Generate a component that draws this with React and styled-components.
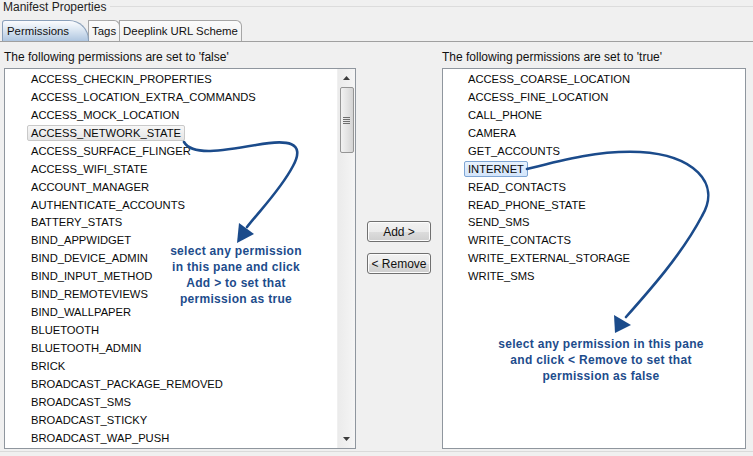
import React from "react";
import styled, { createGlobalStyle } from "styled-components";

const GlobalStyle = createGlobalStyle`
  html, body {
    margin: 0;
    padding: 0;
    background: #f0f0f0;
    font-family: "Liberation Sans", Arial, sans-serif;
    font-size: 12px;
    color: #000;
  }
`;

const Page = styled.div`
  position: relative;
  width: 753px;
  height: 456px;
  overflow: hidden;
  background: #f0f0f0;
`;

const Header = styled.div`
  display: flex;
  align-items: center;
  gap: 4px;
  height: 14px;
  padding-left: 3px;
  color: #1e1e1e;
`;

const HeaderLine = styled.div`
  flex: 1;
  height: 1px;
  background: #dcdcdc;
  margin-top: -2px;
`;

const TabBar = styled.div`
  display: flex;
  align-items: flex-end;
  height: 21px;
  margin-top: 6px;
  padding-left: 2px;
  border-bottom: 1px solid #a0a0a0;
  font-size: 11.4px;
`;

const Tab = styled.div`
  position: relative;
  height: 21px;
  line-height: 20px;
  box-sizing: border-box;
  padding: 0 ${(p) => (p.$active ? "19px" : "3px")} 0 ${(p) => (p.$active ? "4px" : "3px")};
  margin-left: ${(p) => (p.$active ? "0" : "-1px")};
  border: 1px solid ${(p) => (p.$active ? "#8aa0ba" : "#a6a6a6")};
  border-bottom: none;
  border-radius: ${(p) => (p.$active ? "3px 20px 0 0 / 3px 20px 0 0" : "0 6px 0 0")};
  background: ${(p) =>
    p.$active
      ? "linear-gradient(#fbfcfe, #dbe6f2 45%, #afc6e0)"
      : "linear-gradient(#fbfbfb, #f0f0f0)"};
  z-index: ${(p) => (p.$active ? 2 : 1)};
  color: #111;
`;

const Body = styled.div`
  display: grid;
  grid-template-columns: 352px 86px 304px;
  grid-template-rows: 26px 381px;
  padding-left: 4px;
`;

const Caption = styled.div`
  align-self: center;
  padding-top: 3px;
  color: #111;
`;

const List = styled.div`
  position: relative;
  display: flex;
  box-sizing: border-box;
  border: 1px solid #8f969e;
  background: #fff;
  overflow: hidden;
`;

const Items = styled.div`
  flex: 1;
  padding-top: 1px;
  padding-left: ${(p) => p.$indent}px;
  font-size: 11.2px;
`;

const Item = styled.div`
  height: 17.95px;
  display: flex;
  align-items: center;
`;

const ItemText = styled.span`
  padding: 0 3px;
  height: 16px;
  line-height: 15px;
  box-sizing: border-box;
  border-radius: 2px;
  border: 1px solid
    ${(p) => (p.$sel === "grey" ? "#c9c9c9" : p.$sel === "blue" ? "#7fa6d4" : "transparent")};
  background: ${(p) =>
    p.$sel === "grey"
      ? "linear-gradient(#f7f7f7, #e5e5e5)"
      : p.$sel === "blue"
      ? "linear-gradient(#e8f2fd, #d3e5fb)"
      : "transparent"};
  white-space: nowrap;
  color: #0a0a0a;
`;

const Scrollbar = styled.div`
  width: 17px;
  display: flex;
  flex-direction: column;
  align-items: center;
  background: linear-gradient(90deg, #ebebeb, #f5f5f5);
  border-left: 1px solid #f0f0f0;
`;

const ArrowBtn = styled.div`
  height: 18px;
  width: 17px;
  display: flex;
  align-items: center;
  justify-content: center;
`;

const Thumb = styled.div`
  width: 14px;
  height: 66px;
  box-sizing: border-box;
  border: 1px solid #959595;
  border-radius: 2px;
  background: linear-gradient(90deg, #f2f2f2, #e4e4e4 50%, #d4d4d4);
  display: flex;
  align-items: center;
  justify-content: center;
`;

const Track = styled.div`
  flex: 1;
`;

const Middle = styled.div`
  display: flex;
  flex-direction: column;
  align-items: center;
  gap: 11px;
  padding-top: 153px;
`;

const Button = styled.button`
  width: 64px;
  height: 21px;
  padding: 0;
  font-family: "Liberation Sans", Arial, sans-serif;
  font-size: 12px;
  color: #111;
  border: 1px solid #707070;
  border-radius: 3px;
  background: linear-gradient(#f2f2f2, #ebebeb 50%, #dddddd 51%, #cfcfcf);
  box-shadow: inset 0 0 0 1px #fcfcfc;
`;

const Note = styled.div`
  position: absolute;
  left: ${(p) => p.$x}px;
  top: ${(p) => p.$y}px;
  transform: translateX(-50%);
  text-align: center;
  white-space: nowrap;
  font-weight: bold;
  font-size: 12px;
  line-height: 16px;
  letter-spacing: 0.3px;
  color: #1d4c8c;
`;

const Overlay = styled.svg`
  position: absolute;
  left: 0;
  top: 0;
  pointer-events: none;
`;

const BottomLine = styled.div`
  margin-top: 2px;
  height: 1px;
  background: #dadada;
`;

const falsePerms = [
  "ACCESS_CHECKIN_PROPERTIES",
  "ACCESS_LOCATION_EXTRA_COMMANDS",
  "ACCESS_MOCK_LOCATION",
  "ACCESS_NETWORK_STATE",
  "ACCESS_SURFACE_FLINGER",
  "ACCESS_WIFI_STATE",
  "ACCOUNT_MANAGER",
  "AUTHENTICATE_ACCOUNTS",
  "BATTERY_STATS",
  "BIND_APPWIDGET",
  "BIND_DEVICE_ADMIN",
  "BIND_INPUT_METHOD",
  "BIND_REMOTEVIEWS",
  "BIND_WALLPAPER",
  "BLUETOOTH",
  "BLUETOOTH_ADMIN",
  "BRICK",
  "BROADCAST_PACKAGE_REMOVED",
  "BROADCAST_SMS",
  "BROADCAST_STICKY",
  "BROADCAST_WAP_PUSH",
];

const truePerms = [
  "ACCESS_COARSE_LOCATION",
  "ACCESS_FINE_LOCATION",
  "CALL_PHONE",
  "CAMERA",
  "GET_ACCOUNTS",
  "INTERNET",
  "READ_CONTACTS",
  "READ_PHONE_STATE",
  "SEND_SMS",
  "WRITE_CONTACTS",
  "WRITE_EXTERNAL_STORAGE",
  "WRITE_SMS",
];

function Arrow({ d, head }) {
  return (
    <g>
      <path d={d} fill="none" stroke="#1b4b8b" strokeWidth="2.6" strokeLinecap="round" />
      <polygon points={head} fill="#1b4b8b" />
    </g>
  );
}

export default function App() {
  return (
    <Page>
      <GlobalStyle />
      <Header>
        Manifest Properties
        <HeaderLine />
      </Header>
      <TabBar>
        <Tab $active>Permissions</Tab>
        <Tab>Tags</Tab>
        <Tab>Deeplink URL Scheme</Tab>
      </TabBar>
      <Body>
        <Caption>The following permissions are set to 'false'</Caption>
        <div />
        <Caption>The following permissions are set to 'true'</Caption>

        <List>
          <Items $indent={22}>
            {falsePerms.map((p) => (
              <Item key={p}>
                <ItemText $sel={p === "ACCESS_NETWORK_STATE" ? "grey" : ""}>{p}</ItemText>
              </Item>
            ))}
          </Items>
          <Scrollbar>
            <ArrowBtn>
              <svg width="7" height="4" viewBox="0 0 7 4">
                <polygon points="3.5,0 7,4 0,4" fill="#3c3c3c" />
              </svg>
            </ArrowBtn>
            <Thumb>
              <svg width="7" height="7" viewBox="0 0 7 7">
                <path d="M0 0.5h7M0 2.5h7M0 4.5h7M0 6.5h7" stroke="#6e6e6e" strokeWidth="1" />
              </svg>
            </Thumb>
            <Track />
            <ArrowBtn>
              <svg width="7" height="4" viewBox="0 0 7 4">
                <polygon points="0,0 7,0 3.5,4" fill="#3c3c3c" />
              </svg>
            </ArrowBtn>
          </Scrollbar>
          <Note $x={231} $y={174}>
            select any permission
            <br />
            in this pane and click
            <br />
            Add &gt; to set that
            <br />
            permission as true
          </Note>
        </List>

        <Middle>
          <Button>Add &gt;</Button>
          <Button>&lt; Remove</Button>
        </Middle>

        <List>
          <Items $indent={21}>
            {truePerms.map((p) => (
              <Item key={p}>
                <ItemText $sel={p === "INTERNET" ? "blue" : ""}>{p}</ItemText>
              </Item>
            ))}
          </Items>
          <Note $x={158} $y={267}>
            select any permission in this pane
            <br />
            and click &lt; Remove to set that
            <br />
            permission as false
          </Note>
        </List>
      </Body>
      <BottomLine />
      <Overlay width="753" height="456" viewBox="0 0 753 456">
        <Arrow
          d="M184,142 C192,156 222,151 256,145 C288,139 306,142 293,166 C281,189 262,208 247,227"
          head="237,243 239,223 254,234"
        />
        <Arrow
          d="M527,169 C562,160 600,150 640,152 C692,155 722,182 702,216 C682,254 650,290 626,317"
          head="615,333 614,315 631,325"
        />
      </Overlay>
    </Page>
  );
}
